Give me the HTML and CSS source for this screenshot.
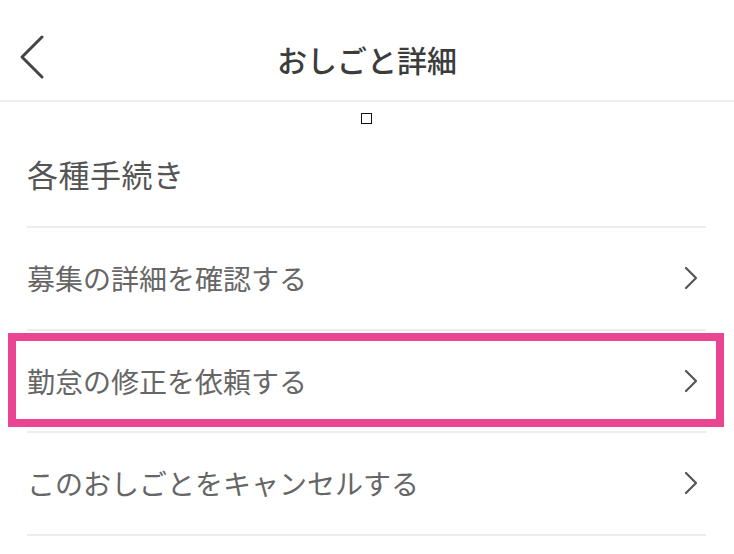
FILE: index.html
```html
<!DOCTYPE html>
<html lang="ja">
<head>
<meta charset="utf-8">
<link rel="stylesheet" href="styles.css">
</head>
<body>
<div class="page">
  <header class="header">
    <button class="back" aria-label="戻る">
      <svg width="28" height="46" viewBox="0 0 28 46"><path d="M24 3 L4 23 L24 43" fill="none" stroke="#444" stroke-width="3" stroke-linecap="round" stroke-linejoin="round"/></svg>
    </button>
    <h1 class="title">おしごと詳細</h1>
  </header>
  <main class="content">
    <span class="tofu"></span>
    <h2 class="section-title">各種手続き</h2>
    <ul class="list">
      <li class="row"><span>募集の詳細を確認する</span><svg class="chev" width="14" height="24" viewBox="0 0 14 24"><path d="M2 2 L12 12 L2 22" fill="none" stroke="#555" stroke-width="2.2" stroke-linecap="round" stroke-linejoin="round"/></svg></li>
      <li class="row highlighted"><span>勤怠の修正を依頼する</span><svg class="chev" width="14" height="24" viewBox="0 0 14 24"><path d="M2 2 L12 12 L2 22" fill="none" stroke="#555" stroke-width="2.2" stroke-linecap="round" stroke-linejoin="round"/></svg></li>
      <li class="row"><span>このおしごとをキャンセルする</span><svg class="chev" width="14" height="24" viewBox="0 0 14 24"><path d="M2 2 L12 12 L2 22" fill="none" stroke="#555" stroke-width="2.2" stroke-linecap="round" stroke-linejoin="round"/></svg></li>
    </ul>
  </main>
</div>
</body>
</html>
```
FILE: styles.css
```css
* { box-sizing: border-box; }
html, body { margin: 0; padding: 0; background: #fff; }
body {
  font-family: "Noto Sans CJK JP", "Noto Sans", sans-serif;
  color: #666;
  width: 734px;
  height: 554px;
  overflow: hidden;
}
.header {
  position: relative;
  height: 102px;
  border-bottom: 2px solid #efefef;
  display: flex;
  align-items: center;
  justify-content: center;
}
.back {
  position: absolute;
  left: 18px;
  top: 34px;
  background: none;
  border: 0;
  padding: 0;
  display: flex;
}
.title {
  margin: 0;
  font-size: 30px;
  font-weight: 500;
  color: #3c3c3c;
  line-height: 40px;
  padding-top: 18px;
}
.content {
  position: relative;
  padding: 0 28px 0 27px;
}
.tofu {
  position: absolute;
  left: 361px;
  top: 11px;
  width: 11px;
  height: 11px;
  border: 1.5px solid #111;
}
.section-title {
  margin: 0;
  font-size: 31px;
  font-weight: 400;
  color: #555;
  line-height: 42px;
  padding: 51px 0 31px;
  letter-spacing: 0.5px;
}
.list {
  list-style: none;
  margin: 0;
  padding: 0;
  border-top: 2px solid #ececec;
}
.row {
  position: relative;
  height: 102.5px;
  border-bottom: 2px solid #ececec;
  display: flex;
  align-items: center;
  justify-content: space-between;
  font-size: 28px;
  color: #666;
  padding-right: 8px;
}
.row span { line-height: 40px; }
.highlighted::after {
  content: "";
  position: absolute;
  left: -19px;
  right: -18px;
  top: 2.5px;
  bottom: 4px;
  border: 8px solid #e94591;
}
```
